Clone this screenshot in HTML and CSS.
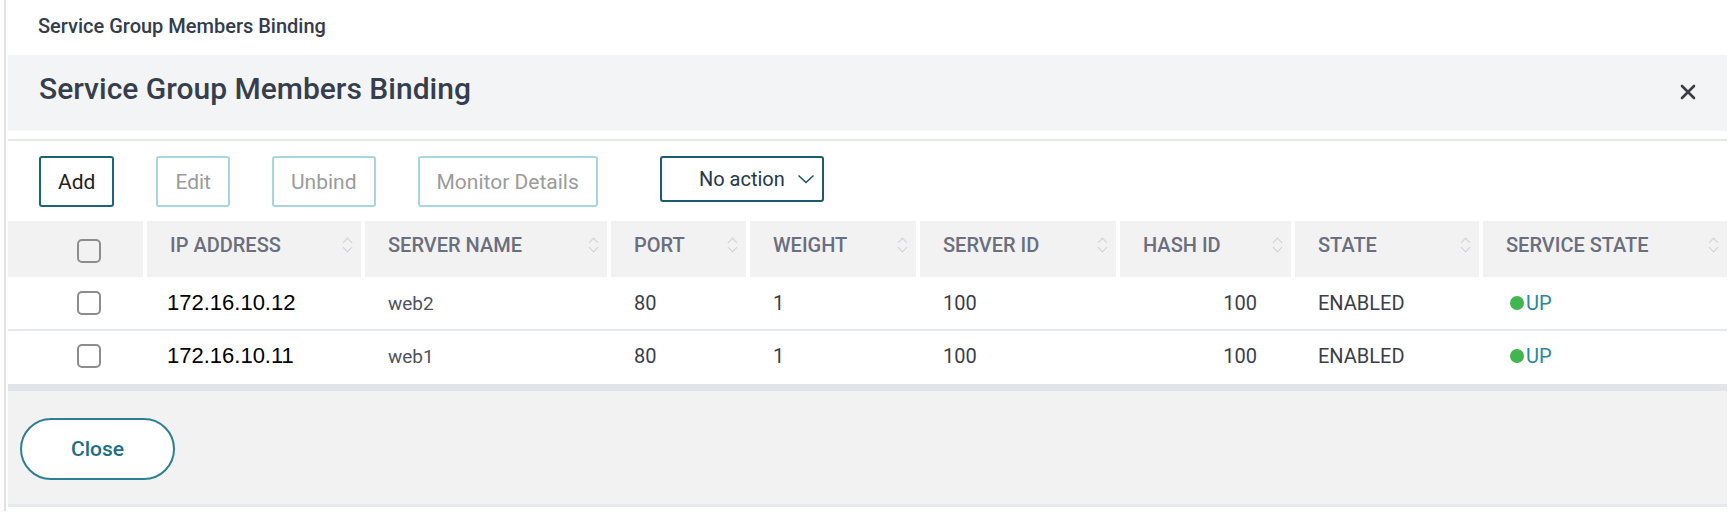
FILE: index.html
```html
<!DOCTYPE html>
<html lang="en">
<head>
  <meta charset="UTF-8">
  <title>Service Group Members Binding</title>
  <link rel="stylesheet" href="styles.css">
</head>
<body>
  <div class="page">
    <div class="crumb">Service Group Members Binding</div>

    <div class="dialog">
      <div class="dlg-head">
        <h2>Service Group Members Binding</h2>
        <button class="x" title="Close">
          <svg width="16" height="16" viewBox="0 0 16 16"><path d="M2 2 L14 14 M14 2 L2 14" stroke="#3a3d44" stroke-width="2.6" stroke-linecap="round"/></svg>
        </button>
      </div>
      <div class="gap-line"></div>

      <div class="toolbar">
        <button class="btn">Add</button>
        <button class="btn off">Edit</button>
        <button class="btn off">Unbind</button>
        <button class="btn off">Monitor Details</button>
        <div class="select">
          No action
          <svg width="18" height="10" viewBox="0 0 18 10"><path d="M1.5 1.5 L9 8.5 L16.5 1.5" fill="none" stroke="#1f4f63" stroke-width="1.5"/></svg>
        </div>
      </div>

      <div class="grid">
        <div class="row head">
          <div class="cell chk"><span class="box"></span></div>
          <div class="cell">IP ADDRESS<i class="sort"></i></div>
          <div class="cell">SERVER NAME<i class="sort"></i></div>
          <div class="cell">PORT<i class="sort"></i></div>
          <div class="cell">WEIGHT<i class="sort"></i></div>
          <div class="cell">SERVER ID<i class="sort"></i></div>
          <div class="cell">HASH ID<i class="sort"></i></div>
          <div class="cell">STATE<i class="sort"></i></div>
          <div class="cell">SERVICE STATE<i class="sort"></i></div>
        </div>
        <div class="row">
          <div class="cell chk"><span class="box"></span></div>
          <div class="cell ip">172.16.10.12</div>
          <div class="cell name">web2</div>
          <div class="cell">80</div>
          <div class="cell">1</div>
          <div class="cell">100</div>
          <div class="cell num">100</div>
          <div class="cell">ENABLED</div>
          <div class="cell"><span class="up"><b></b>UP</span></div>
        </div>
        <div class="row">
          <div class="cell chk"><span class="box"></span></div>
          <div class="cell ip">172.16.10.11</div>
          <div class="cell name">web1</div>
          <div class="cell">80</div>
          <div class="cell">1</div>
          <div class="cell">100</div>
          <div class="cell num">100</div>
          <div class="cell">ENABLED</div>
          <div class="cell"><span class="up"><b></b>UP</span></div>
        </div>
      </div>

      <div class="dlg-foot">
        <button class="close">Close</button>
      </div>
    </div>
  </div>
</body>
</html>
```

FILE: styles.css
```css
body {
  margin: 0;
  background: #fff;
  font-family: Roboto, "Liberation Sans", sans-serif;
  color: #333;
}
.page {
  margin-left: 4px;
  border-left: 2px solid #e2e2e2;
  padding-left: 2px;
  padding-bottom: 4px;
}
.crumb {
  height: 55px;
  box-sizing: border-box;
  padding: 14px 0 0 30px;
  font-size: 20px;
  line-height: 24px;
  font-weight: 500;
  color: #343d4c;
}
.dialog {
  width: 1719px;
}
.dlg-head {
  height: 76px;
  background: #f3f4f6;
  display: flex;
  align-items: center;
  justify-content: space-between;
  padding: 0 31px 0 31px;
  box-sizing: border-box;
}
.dlg-head h2 {
  margin: 0 0 10px 0;
  font-size: 30px;
  font-weight: 500;
  color: #363e4e;
}
.x {
  border: none;
  background: none;
  padding: 0;
  margin-top: 0;
  cursor: pointer;
}
.gap-line {
  height: 8px;
  border-bottom: 2px solid #e4e8ed;
}
.toolbar {
  height: 80px;
  box-sizing: border-box;
  padding: 15px 0 0 31px;
  display: flex;
  align-items: flex-start;
  gap: 42px;
}
.btn {
  height: 51px;
  padding: 0 17px;
  border: 2px solid #1d6478;
  border-radius: 3px;
  background: #fff;
  font-family: Roboto, sans-serif;
  font-size: 21px;
  color: #222;
}
.btn.off {
  border-color: #a9d6de;
  color: #9b9b9b;
}
.select {
  margin-left: 20px;
  width: 164px;
  height: 46px;
  box-sizing: border-box;
  border: 2px solid #1d5a6c;
  border-radius: 3px;
  display: flex;
  align-items: center;
  justify-content: flex-end;
  gap: 12px;
  padding-right: 7px;
  font-size: 20px;
  color: #25384d;
}
.row {
  display: grid;
  grid-template-columns: 135px 214px 242px 135px 166px 196px 171px 184px 244px;
  column-gap: 4px;
  height: 52px;
  border-bottom: 2px solid #e5e8ed;
}
.row:last-child {
  border-bottom: none;
  height: 50px;
  padding-bottom: 3px;
}
.cell {
  display: flex;
  align-items: center;
  padding-left: 23px;
  font-size: 20px;
  color: #3b3e48;
}
.row.head {
  height: 56px;
  border-bottom: none;
}
.row.head .cell {
  background: #f2f2f2;
  color: #6a6e7e;
  font-weight: 500;
  padding-bottom: 8px;
  padding-right: 7px;
  justify-content: space-between;
}
.cell.chk {
  padding-left: 69px;
}
.row.head .cell.chk {
  padding-bottom: 0;
  justify-content: flex-start;
}
.box {
  width: 20px;
  height: 20px;
  border: 2px solid #8d8d8d;
  border-radius: 5px;
}
.row.head .box {
  margin-top: 4px;
}
.cell.ip {
  padding-left: 20px;
  font-family: "Liberation Sans", Arial, sans-serif;
  font-size: 22px;
  color: #000;
}
.cell.name {
  color: #4e5260;
  font-size: 19px;
}
.cell.num {
  justify-content: flex-end;
  padding-right: 34px;
}
.sort {
  width: 12px;
  height: 16px;
  position: relative;
}
.sort::before, .sort::after {
  content: "";
  position: absolute;
  left: 2px;
  width: 6px;
  height: 6px;
  border-left: 1.5px solid #cdd0d6;
  border-top: 1.5px solid #cdd0d6;
}
.sort::before {
  top: 2px;
  transform: rotate(45deg);
}
.sort::after {
  bottom: 2px;
  transform: rotate(-135deg);
}
.up {
  display: flex;
  align-items: center;
  gap: 2px;
  color: #2b86a2;
  margin-left: 4px;
}
.up b {
  flex: none;
  width: 14px;
  height: 14px;
  border-radius: 50%;
  background: #3fb650;
}
.dlg-foot {
  background: #f2f2f2;
  border-top: 7px solid #e1e5ea;
  border-bottom: 3px solid #e6e9ee;
  padding: 27px 0 0 12px;
  height: 86px;
}
.close {
  width: 155px;
  height: 62px;
  border: 2px solid #2d8093;
  border-radius: 31px;
  background: #fff;
  font-family: Roboto, sans-serif;
  font-size: 21px;
  font-weight: 500;
  color: #1f6e86;
}
```
